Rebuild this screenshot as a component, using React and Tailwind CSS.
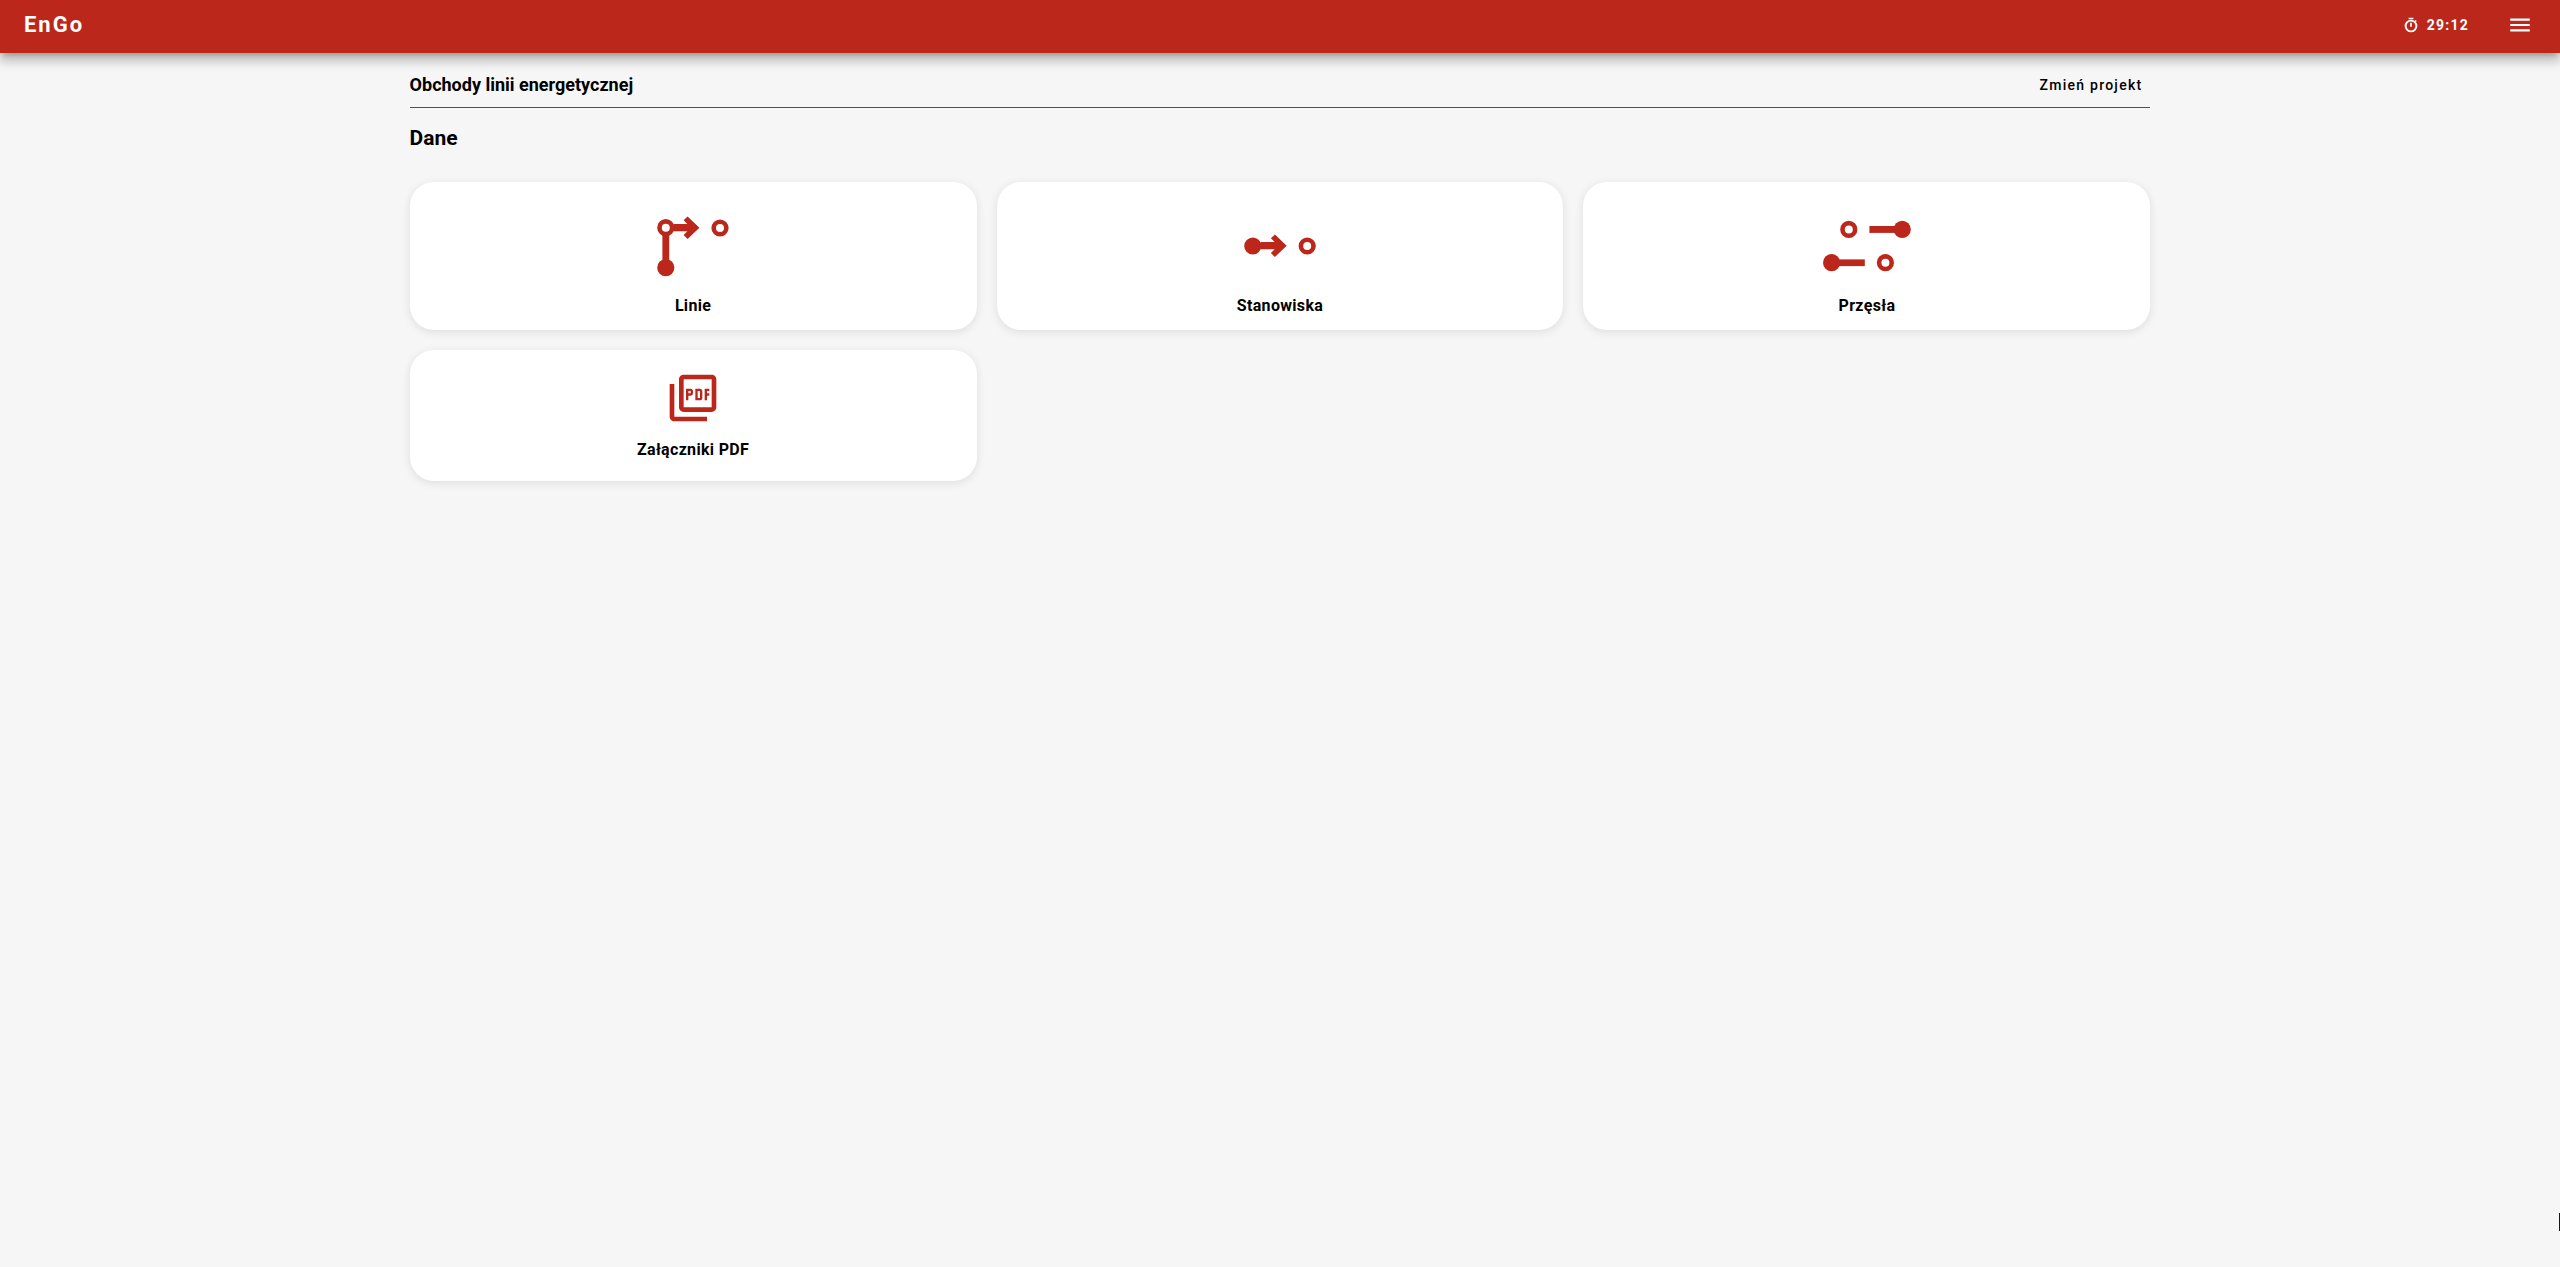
import { MdMenu, MdOutlinePictureAsPdf } from "react-icons/md";

const Arrow = ({ x, y }) => (
  <path
    d="M0 -3.6H14L10.2 -7.4L14.2 -11.3L26 0L14.2 11.3L10.2 7.4L14 3.6H0Z"
    transform={`translate(${x} ${y})`}
  />
);

const OpenPoint = ({ x, y }) => (
  <circle cx={x} cy={y} r="6.3" fill="#fff" stroke="currentColor" strokeWidth="4.6" />
);

const LinesIcon = () => (
  <svg className="h-[100px] w-[100px]" viewBox="0 0 100 100" fill="currentColor" aria-hidden="true">
    <rect x="19.4" y="36" width="6.8" height="36" />
    <Arrow x={30.4} y={33.7} />
    <OpenPoint x={22.8} y={33.7} />
    <circle cx="22.8" cy="73.7" r="8.6" />
    <OpenPoint x={77} y={34} />
  </svg>
);

const PositionsIcon = () => (
  <svg className="h-[100px] w-[100px]" viewBox="0 0 100 100" fill="currentColor" aria-hidden="true">
    <circle cx="22.8" cy="52" r="8.6" />
    <Arrow x={30.7} y={51.7} />
    <OpenPoint x={77.2} y={52} />
  </svg>
);

const SpansIcon = () => (
  <svg className="h-[100px] w-[100px]" viewBox="0 0 100 100" fill="currentColor" aria-hidden="true">
    <OpenPoint x={31.8} y={35.4} />
    <rect x="52.4" y="32" width="30" height="6.9" />
    <circle cx="85.2" cy="35.4" r="8.6" />
    <circle cx="14.6" cy="68.7" r="8.6" />
    <rect x="18" y="65.4" width="29.8" height="6.7" />
    <OpenPoint x={68.4} y={68.7} />
  </svg>
);

const TimerIcon = () => (
  <svg className="h-4 w-4" viewBox="0 0 16 16" fill="none" stroke="currentColor" aria-hidden="true">
    <circle cx="8" cy="9" r="5.4" strokeWidth="1.9" />
    <path d="M5.6 1.5H10.4M8 5.8V9.8" strokeWidth="1.7" />
    <path d="M11.8 4.8L13.1 3.5" strokeWidth="1.7" />
  </svg>
);

const tiles = [
  { label: "Linie", icon: <LinesIcon />, padding: "py-3" },
  { label: "Stanowiska", icon: <PositionsIcon />, padding: "py-3" },
  { label: "Przęsła", icon: <SpansIcon />, padding: "py-3" },
  {
    label: "Załączniki PDF",
    icon: <MdOutlinePictureAsPdf className="mb-3 h-14 w-14" aria-hidden="true" />,
    padding: "pt-5 pb-[19px]",
  },
];

const Header = () => (
  <header className="relative flex h-[53px] items-center justify-between bg-[#bb271a] pr-[25px] pb-[3px] pl-6 text-white shadow-[0_5px_5px_-3px_rgba(0,0,0,0.2),0_8px_10px_1px_rgba(0,0,0,0.14),0_3px_14px_2px_rgba(0,0,0,0.12)]">
    <a href="#" className="text-[22px] leading-6 font-bold tracking-[0.09em]">
      EnGo
    </a>
    <div className="flex items-center">
      <div className="mr-9 flex items-center gap-2">
        <TimerIcon />
        <span className="text-sm font-bold tracking-[0.09em]">29:12</span>
      </div>
      <button type="button" aria-label="Menu" className="p-0.5">
        <MdMenu className="h-[26px] w-[26px]" />
      </button>
    </div>
  </header>
);

const App = () => {
  return (
    <div className="min-h-screen bg-[#f6f6f6] font-['Roboto',sans-serif] text-black">
      <Header />
      <main className="mx-auto w-[68%]">
        <div className="flex items-center justify-between border-b border-[#bb271a] pt-[18px] pb-2">
          <h1 className="text-lg font-bold">Obchody linii energetycznej</h1>
          <button type="button" className="px-2 text-sm font-medium tracking-[0.09em]">
            Zmień projekt
          </button>
        </div>
        <h2 className="mt-4 mb-[30px] text-[21px] leading-7 font-bold">Dane</h2>
        <div className="grid grid-cols-3 items-start gap-5">
          {tiles.map((tile) => (
            <button
              key={tile.label}
              type="button"
              className={`flex flex-col items-center rounded-3xl bg-white shadow-[0_2px_10px_rgba(0,0,0,0.1)] ${tile.padding}`}
            >
              <span className="text-[#bb271a]">{tile.icon}</span>
              <span className="text-base font-bold tracking-[0.02em]">{tile.label}</span>
            </button>
          ))}
        </div>
      </main>
      {/* collapsed side panel handle */}
      <div className="fixed right-0 bottom-9 h-[18px] w-px bg-[#17141f]" />
    </div>
  );
};

export default App;
